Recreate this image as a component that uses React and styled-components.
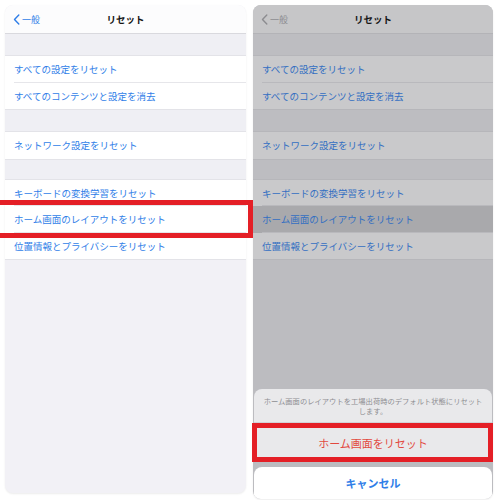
import React from "react";
import styled, { createGlobalStyle, css } from "styled-components";

const Global = createGlobalStyle`
  html, body { margin: 0; padding: 0; background: #ffffff; }
  body { font-family: "Noto Sans CJK JP", "Noto Sans", sans-serif; }
  * { box-sizing: border-box; }
`;

const Page = styled.div`
  width: 500px;
  height: 500px;
  display: flex;
  align-items: flex-start;
  gap: 7px;
  padding: 5px 7px 0 5px;
  position: relative;
  overflow: hidden;
`;

const Phone = styled.div`
  position: relative;
  width: ${(p) => p.$w}px;
  height: ${(p) => p.$h}px;
  border-radius: 8px;
  overflow: hidden;
  display: flex;
  flex-direction: column;
  background: ${(p) => (p.$dim ? "#bcbcc0" : "#f2f1f6")};
  box-shadow: 0 1px 2px rgba(0, 0, 0, 0.08);
`;

const NavBar = styled.div`
  height: 29px;
  flex: none;
  display: grid;
  grid-template-columns: 1fr auto 1fr;
  align-items: center;
  padding: 0 8px;
  background: ${(p) => (p.$dim ? "#c6c6c8" : "#fcfcfd")};
  border-bottom: 1px solid ${(p) => (p.$dim ? "#b3b3b7" : "#d9d9de")};
`;

const Back = styled.div`
  display: flex;
  align-items: center;
  gap: 2px;
  font-size: 9px;
  color: ${(p) => (p.$dim ? "#8c8c90" : "#2f7ee8")};
`;

const Title = styled.div`
  font-size: 9.5px;
  font-weight: 700;
  color: #151515;
`;

const Gap = styled.div`
  height: ${(p) => p.$h}px;
  flex: none;
  background: ${(p) => (p.$dim ? "#bdbdc1" : "#efeff4")};
`;

const Group = styled.div`
  flex: none;
  border-top: 1px solid ${(p) => (p.$dim ? "#b6b6ba" : "#e3e3e8")};
  border-bottom: 1px solid ${(p) => (p.$dim ? "#b6b6ba" : "#e3e3e8")};
`;

const Row = styled.div`
  height: 26.5px;
  display: flex;
  align-items: center;
  padding-left: 9px;
  font-size: 9.5px;
  background: ${(p) =>
    p.$dim ? (p.$active ? "#a9a9ac" : "#c9c9cb") : "#ffffff"};
  color: ${(p) => (p.$dim ? "#336fc2" : "#2f7ee8")};
  position: relative;
  ${(p) =>
    !p.$last &&
    css`
      &::after {
        content: "";
        position: absolute;
        left: 9px;
        right: 0;
        bottom: 0;
        height: 1px;
        background: ${p.$dim ? "#b9b9bd" : "#e6e6ea"};
      }
    `}
`;

const Sheet = styled.div`
  position: absolute;
  left: 1px;
  right: 1px;
  bottom: 0;
  display: flex;
  flex-direction: column;
  gap: 5px;
`;

const SheetCard = styled.div`
  background: #e9e9eb;
  border-radius: 8px;
  overflow: hidden;
`;

const SheetMessage = styled.div`
  height: 34px;
  padding: 7px 4px 0;
  font-size: 7.3px;
  line-height: 10px;
  text-align: center;
  white-space: nowrap;
  color: #8e8e92;
  border-bottom: 1px solid #d2d2d6;
`;

const SheetAction = styled.div`
  height: ${(p) => p.$h}px;
  display: flex;
  align-items: center;
  justify-content: center;
  font-size: 11px;
  color: ${(p) => (p.$danger ? "#e2493f" : "#2f7ee8")};
  font-weight: ${(p) => (p.$bold ? 700 : 400)};
`;

const CancelCard = styled(SheetCard)`
  background: #ffffff;
  border-radius: 8px 8px 0 0;
`;

const Highlight = styled.div`
  position: absolute;
  border: 5.5px solid #e41f26;
  pointer-events: none;
`;

const Chevron = ({ color }) => (
  <svg width="7" height="11" viewBox="0 0 7 11" fill="none">
    <path d="M5.8 1 L1.5 5.5 L5.8 10" stroke={color} strokeWidth="1.4" strokeLinecap="round" strokeLinejoin="round" />
  </svg>
);

const Screen = ({ dim, w, h }) => (
  <Phone $dim={dim} $w={w} $h={h}>
    <NavBar $dim={dim}>
      <Back $dim={dim}>
        <Chevron color={dim ? "#8c8c90" : "#2f7ee8"} />
        一般
      </Back>
      <Title>リセット</Title>
      <div />
    </NavBar>
    <Gap $dim={dim} $h={21} />
    <Group $dim={dim}>
      <Row $dim={dim}>すべての設定をリセット</Row>
      <Row $dim={dim} $last>すべてのコンテンツと設定を消去</Row>
    </Group>
    <Gap $dim={dim} $h={21} />
    <Group $dim={dim}>
      <Row $dim={dim} $last>ネットワーク設定をリセット</Row>
    </Group>
    <Gap $dim={dim} $h={19} />
    <Group $dim={dim}>
      <Row $dim={dim}>キーボードの変換学習をリセット</Row>
      <Row $dim={dim} $active>ホーム画面のレイアウトをリセット</Row>
      <Row $dim={dim} $last>位置情報とプライバシーをリセット</Row>
    </Group>
    {dim && (
      <Sheet>
        <SheetCard>
          <SheetMessage>
            ホーム画面のレイアウトを工場出荷時のデフォルト状態にリセット
            <br />
            します。
          </SheetMessage>
          <SheetAction $danger $h={39}>ホーム画面をリセット</SheetAction>
        </SheetCard>
        <CancelCard>
          <SheetAction $bold $h={32}>キャンセル</SheetAction>
        </CancelCard>
      </Sheet>
    )}
  </Phone>
);

export default function App() {
  return (
    <>
      <Global />
      <Page>
        <Screen w={241} h={488} />
        <Screen dim w={240} h={494} />
        <Highlight style={{ left: -6, top: 200, width: 259, height: 38 }} />
        <Highlight style={{ left: 252, top: 423, width: 241, height: 39 }} />
      </Page>
    </>
  );
}
